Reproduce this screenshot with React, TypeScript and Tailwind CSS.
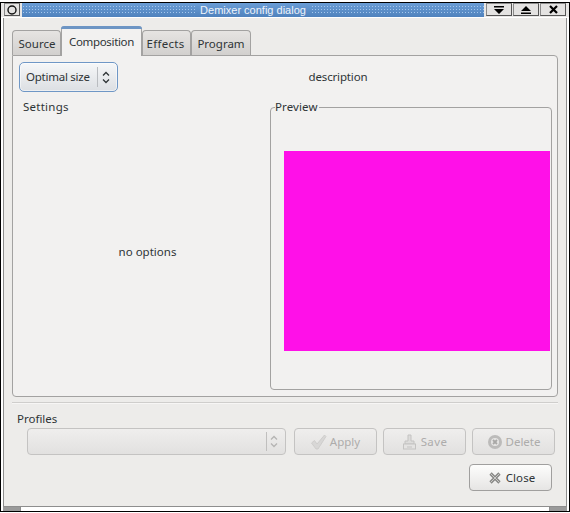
import React from "react";

const font = "font-['Noto_Sans','DejaVu_Sans',sans-serif] text-[11.5px] leading-[14px]";

function Chevrons({ color }: { color: string }) {
  return (
    <svg width="8" height="13" viewBox="0 0 8 13" fill="none" stroke={color} strokeWidth="1.3">
      <path d="M1 4.5 L4 1.5 L7 4.5" />
      <path d="M1 8.5 L4 11.5 L7 8.5" />
    </svg>
  );
}

function Tab({ label, active, w, track }: { label: string; active?: boolean; w: string; track: string }) {
  if (active) {
    return (
      <div className={`${w} h-[30px] -mb-px z-10 rounded-t-[4px] border-x border-[#a3a2a1] bg-[#f2f1f0] flex flex-col`}>
        <div className="h-[3px] -mx-px rounded-t-[4px] bg-[#6d95c4] shrink-0" />
        <div className={`flex-1 flex items-center justify-center pb-[1px] text-[#2e3436] ${track}`}>{label}</div>
      </div>
    );
  }
  return (
    <div className={`${w} h-[25px] pt-[2px] rounded-t-[4px] border border-b-0 border-[#a3a2a1] bg-gradient-to-b from-[#e6e4e2] to-[#d2d0ce] flex items-center justify-center text-[#2e3436] ${track}`}>
      {label}
    </div>
  );
}

function ActionButton({ label, icon, w, enabled, track }: { label: string; icon: React.ReactNode; w: string; enabled?: boolean; track: string }) {
  return (
    <div
      className={`${w} h-[27px] rounded-[4px] border flex items-center justify-center gap-[3px] ${
        enabled
          ? "border-[#a09f9e] bg-gradient-to-b from-[#fdfdfc] to-[#e6e5e4] text-[#2e3436]"
          : "border-[#c4c3c2] bg-gradient-to-b from-[#efeeed] to-[#e2e1e0] text-[#adacab]"
      }`}
    >
      {icon}
      <span className={track}>{label}</span>
    </div>
  );
}

function Titlebtn({ children, w }: { children: React.ReactNode; w: string }) {
  return (
    <div className={`${w} h-[13px] border border-[#8a8a8a] border-r-[#555] border-b-[#555] bg-[#e4e3e2] flex items-center justify-center`}>
      {children}
    </div>
  );
}

export default function App() {
  return (
    <div className={`w-[570px] h-[513px] bg-white pt-[2px] pb-[1px] ${font}`}>
      <div className="h-full border-y border-l-[1px] border-r-[1px] border-black flex flex-col">
        {/* title bar */}
        <div className="h-[14px] shrink-0 flex items-stretch gap-[2px] pl-[3px] pr-[3px] bg-[#e8e7e6]">
          <Titlebtn w="w-[16px]">
            <svg width="10" height="10" viewBox="0 0 10 10"><circle cx="5" cy="5" r="4" fill="none" stroke="#111" strokeWidth="1.4" /></svg>
          </Titlebtn>
          <div className="flex-1 flex items-center bg-gradient-to-b from-[#6a9dd6] to-[#4f82bd]">
            <div className="flex-1 h-[10px] bg-[radial-gradient(#a4c6ec_0.8px,transparent_1px)] bg-[length:3px_3px]" />
            <span className="px-[5px] text-[#eef3fa] font-['Liberation_Sans',sans-serif] text-[11px]">Demixer config dialog</span>
            <div className="flex-1 h-[10px] bg-[radial-gradient(#a4c6ec_0.8px,transparent_1px)] bg-[length:3px_3px]" />
          </div>
          <div className="flex gap-[1px]">
            <Titlebtn w="w-[26px]">
              <svg width="10" height="8" viewBox="0 0 10 8"><path d="M0 0h10v1.5H0zM0 3h10L5 8z" fill="#000" /></svg>
            </Titlebtn>
            <Titlebtn w="w-[26px]">
              <svg width="10" height="8" viewBox="0 0 10 8"><path d="M0 8h10V6.5H0zM0 5h10L5 0z" fill="#000" /></svg>
            </Titlebtn>
            <Titlebtn w="w-[26px]">
              <svg width="9" height="9" viewBox="0 0 9 9"><path d="M1 1 L8 8 M8 1 L1 8" stroke="#000" strokeWidth="2.2" /></svg>
            </Titlebtn>
          </div>
        </div>

        {/* window body */}
        <div className="flex-1 border-x-[2px] border-white bg-transparent flex flex-col min-h-0">
          <div className="flex-1 mt-[1px] border-x border-[#8e8e8e] bg-[#edecea] flex flex-col px-[8px] pt-[8px] min-h-0">
            {/* tabs */}
            <div className="flex items-end h-[29px] shrink-0">
              <Tab label="Source" w="w-[49px]" track="pl-[1px]" />
              <Tab label="Composition" active w="w-[81px]" track="tracking-[-0.33px]" />
              <Tab label="Effects" w="w-[49px]" track="tracking-[0.3px] pr-[2px]" />
              <Tab label="Program" w="w-[60px]" track="" />
            </div>
            {/* notebook page */}
            <div className="h-[342px] w-[546px] shrink-0 border border-[#a3a2a1] rounded-b-[4px] rounded-tr-[4px] bg-[#f2f1f0] flex flex-col text-[#2e3436] pl-[6px] pt-[6px]">
              <div className="flex items-center h-[30px] shrink-0">
                <div className="w-[99px] h-[30px] rounded-[5px] border border-[#6f97c6] shadow-[inset_0_0_0_1px_#ffffff80] bg-gradient-to-b from-[#f6f7f8] to-[#dcdfe3] flex items-center pl-[6px]">
                  <span className="w-[71px] tracking-[-0.25px]">Optimal size</span>
                  <div className="h-[20px] w-px bg-[#b9bcc0]" />
                  <div className="ml-[4px] flex"><Chevrons color="#2e3436" /></div>
                </div>
                <div className="ml-[151px] w-[138px] text-center tracking-[-0.15px]">description</div>
              </div>
              <div className="flex flex-1 min-h-0 pt-[8px] pb-[5px] ">
                <div className="w-[251px] flex flex-col pl-[4px]">
                  <div className="tracking-[0.25px]">Settings</div>
                  <div className="flex-1 flex items-center justify-center pb-[2px] pl-[2px]">no options</div>
                </div>
                <div className="relative w-[282px] mt-[7px] h-[283px] border border-[#a3a2a1] rounded-[4px] pt-[43px] pl-[13px]">
                  <span className="absolute -top-[8px] left-[4px] bg-[#f2f1f0] pr-[1px] tracking-[0.1px]">Preview</span>
                  <div className="w-[266px] h-[200px] bg-[#ff10e8]" />
                </div>
              </div>
            </div>
            {/* separator */}
            <div className="h-[2px] mt-[5px] shrink-0 border-t border-[#cfcecc] bg-[#f7f6f5] w-[546px]" />
            {/* profiles */}
            <div className="pl-[5px] mt-[8px] text-[#2e3436]">Profiles</div>
            <div className="flex mt-[2px] pl-[15px] gap-[8px]">
              <div className="w-[259px] h-[27px] rounded-[4px] border border-[#c4c3c2] bg-gradient-to-b from-[#efeeed] to-[#e2e1e0] flex items-center justify-end pr-[7px]">
                <div className="h-[19px] w-px bg-[#c0bfbe] mr-[3px]" />
                <Chevrons color="#b5b4b3" />
              </div>
              <ActionButton track="" label="Apply" w="w-[83px]" icon={
                <svg width="16" height="16" viewBox="0 0 16 16"><path d="M0.5 9 L3.5 6.5 L6 10 L13.5 1 L15 2.5 L7 15 L5 15 Z" fill="#d8d7d6" stroke="#cac9c8" strokeWidth="0.8" /></svg>
              } />
              <div className="-ml-[2px]">
                <ActionButton track="tracking-[0.4px]" label="Save" w="w-[83px]" icon={
                  <svg width="16" height="16" viewBox="0 0 16 16"><path d="M6 1h3v6h3v3H3V7h3z" fill="#dddcdb" stroke="#c4c3c2" /><rect x="1.5" y="10" width="12" height="5" fill="#e4e3e2" stroke="#c4c3c2" /><path d="M5 13h5" stroke="#c4c3c2" /></svg>
                } />
              </div>
              <div className="-ml-[2px]">
                <ActionButton track="" label="Delete" w="w-[83px]" icon={
                  <svg width="16" height="16" viewBox="0 0 16 16"><circle cx="8" cy="8" r="7" fill="#bcbbba" /><circle cx="8" cy="8" r="4" fill="#e6e5e4" /><path d="M6 6 L10 10 M10 6 L6 10" stroke="#a9a8a7" strokeWidth="1.8" /></svg>
                } />
              </div>
            </div>
            <div className="flex justify-end mt-[9px] pr-[6px]">
              <ActionButton track="tracking-[0.1px]" enabled label="Close" w="w-[83px]" icon={
                <svg width="14" height="14" viewBox="0 0 14 14" className="mr-[1px] ml-[2px]"><path d="M2.5 2.5 L11.5 11.5 M11.5 2.5 L2.5 11.5" stroke="#8a8a88" strokeWidth="3.2" /><path d="M3 3 L11 11 M11 3 L3 11" stroke="#c9c9c7" strokeWidth="1" /></svg>
              } />
            </div>
          </div>
          {/* bottom resize grips */}
          <div className="h-[5px] shrink-0 border-t border-[#8e8e8e] flex justify-between">
            <div className="w-[18px] h-full bg-[#9a9a9a] border-r border-[#8e8e8e]" />
            <div className="w-[18px] h-full bg-[#9a9a9a] border-l border-[#8e8e8e]" />
          </div>
        </div>
      </div>
    </div>
  );
}
